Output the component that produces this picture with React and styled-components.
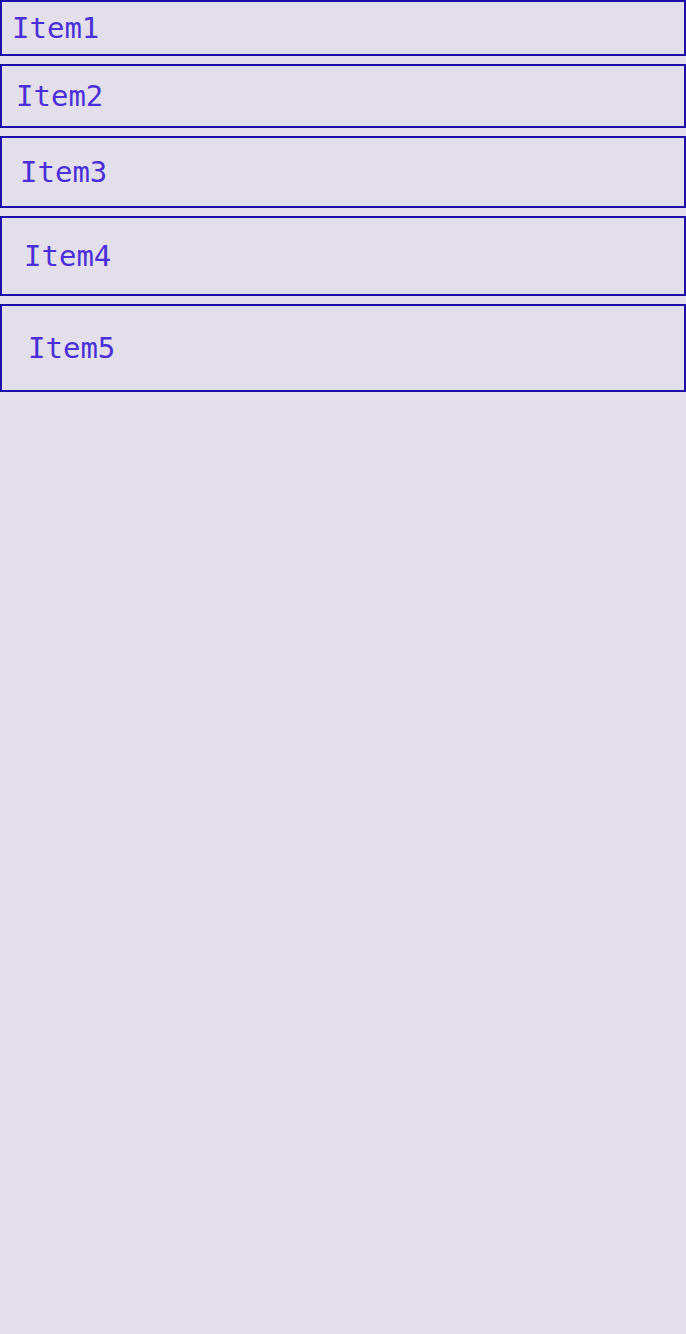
import React from 'react'
import styled, { createGlobalStyle } from 'styled-components'

const GlobalStyle = createGlobalStyle`
    html, body {
        margin: 0;
        padding: 0;
        background: #e2dfea;
        min-height: 100%;
    }
    body {
        font-family: "DejaVu Sans Mono", monospace;
    }
`

const List = styled.div`
    display: flex;
    flex-direction: column;
    gap: 8px;
`

const Item = styled.div`
    border: 2px solid #1d0fa8;
    padding: ${props => props.pad}px;
    font-size: 29px;
    line-height: 32px;
    color: #4a2fd8;
`

const items = ['Item1', 'Item2', 'Item3', 'Item4', 'Item5']

function App() {
    return (
        <>
            <GlobalStyle />
            <List>
                {items.map((name, i) => (
                    <Item key={name} pad={10 + i * 4}>{name}</Item>
                ))}
            </List>
        </>
    )
}

export default App
